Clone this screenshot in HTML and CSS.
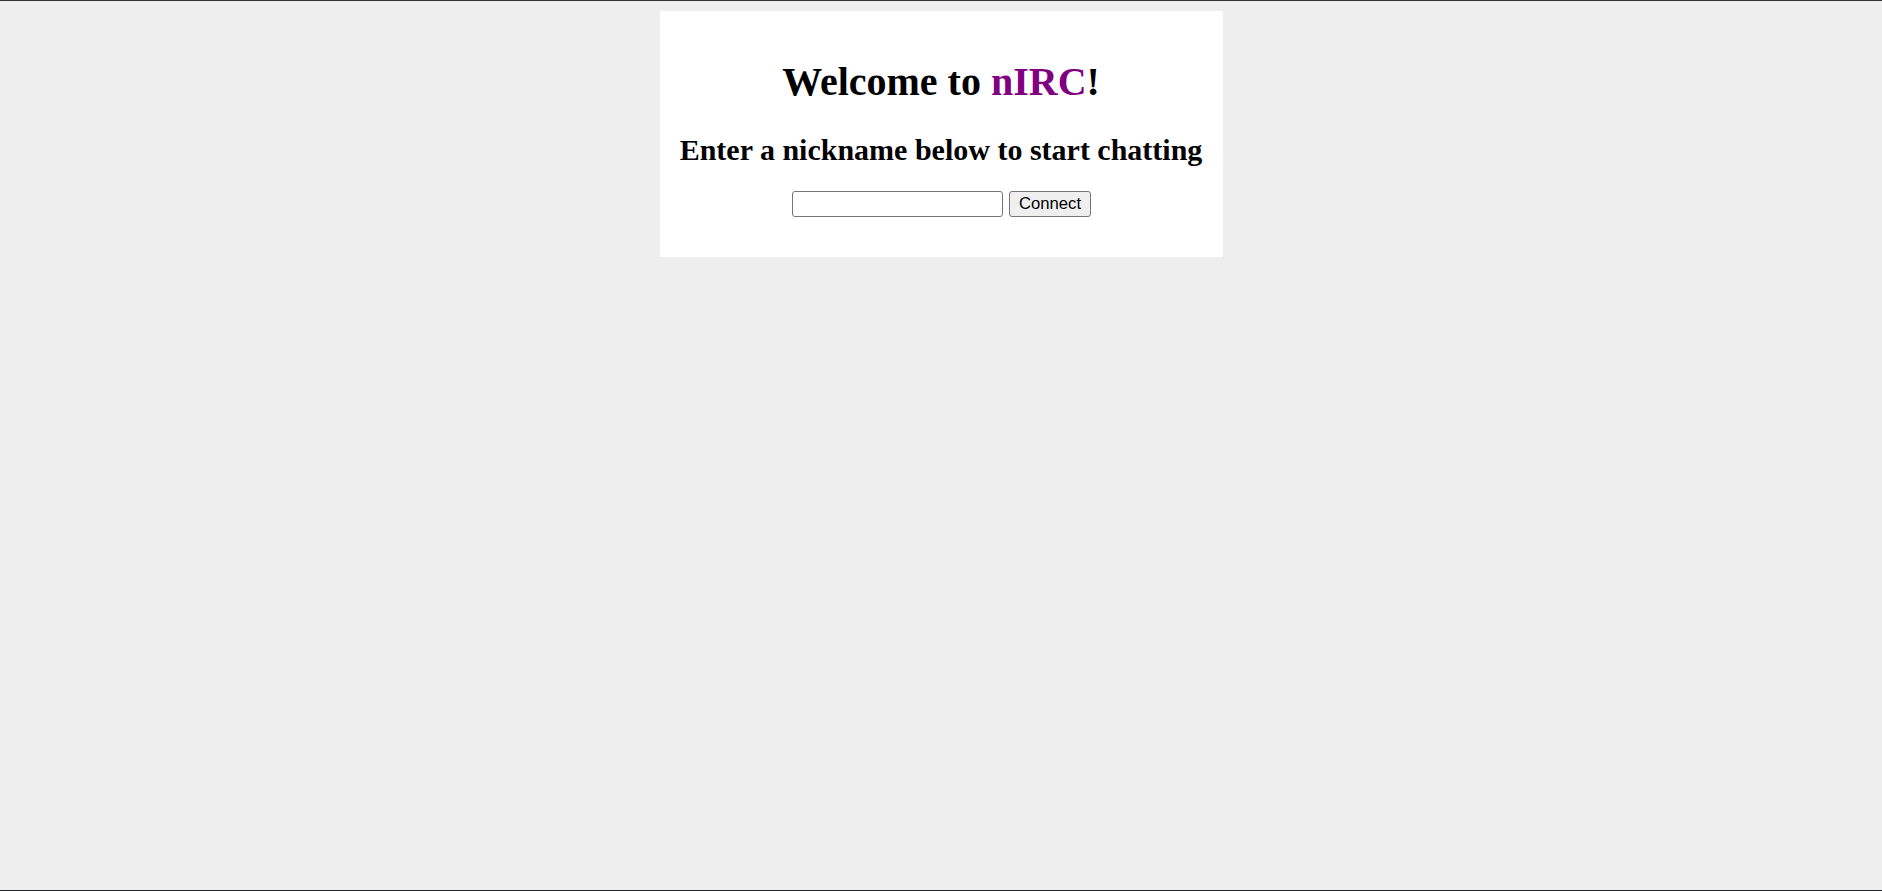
FILE: index.html
```html
<!DOCTYPE html>
<html lang="en">
<head>
<meta charset="utf-8">
<title>nIRC</title>
<link rel="stylesheet" href="styles.css">
</head>
<body>
<main class="card">
  <h1 class="title">Welcome to <span class="brand">nIRC</span>!</h1>
  <h2 class="subtitle">Enter a nickname below to start chatting</h2>
  <form class="connect-form" onsubmit="return false;">
    <input class="nick-input" type="text" aria-label="Nickname">
    <button class="connect-btn" type="submit">Connect</button>
  </form>
</main>
</body>
</html>
```

FILE: styles.css
```css
html {
  background: #eeeeee;
  border-top: 1px solid #333333;
  border-bottom: 1px solid #22222a;
  min-height: 100vh;
  box-sizing: border-box;
}

body {
  margin: 10px;
  font-family: "Liberation Serif", "Times New Roman", serif;
  color: #000;
}

.card {
  width: 563px;
  box-sizing: border-box;
  margin: 0 auto;
  background: #ffffff;
  padding: 21px 0 20px;
  text-align: center;
  display: flow-root;
}

.title {
  font-size: 40px;
  font-weight: bold;
  margin: 27px 0 27px;
  line-height: 46px;
}

.brand {
  color: #800080;
}

.subtitle {
  font-size: 30px;
  font-weight: bold;
  margin: 24px 0 23px;
  line-height: 35px;
}

.connect-form {
  display: flex;
  justify-content: center;
  align-items: center;
  gap: 6px;
  margin: 0 0 19px;
  padding: 1px 0 1px 1px;
}

.nick-input {
  width: 211px;
  height: 26px;
  box-sizing: border-box;
  border: 1px solid #767676;
  border-radius: 3px;
  padding: 1px 3px;
  margin: 0;
  font-family: "Liberation Sans", Arial, sans-serif;
  font-size: 16.67px;
  background: #fff;
}

.connect-btn {
  height: 26px;
  box-sizing: border-box;
  border: 1px solid #767676;
  border-radius: 3px;
  background: #efefef;
  padding: 0 9px;
  margin: 0;
  font-family: "Liberation Sans", Arial, sans-serif;
  font-size: 16.67px;
  color: #000;
}
```
